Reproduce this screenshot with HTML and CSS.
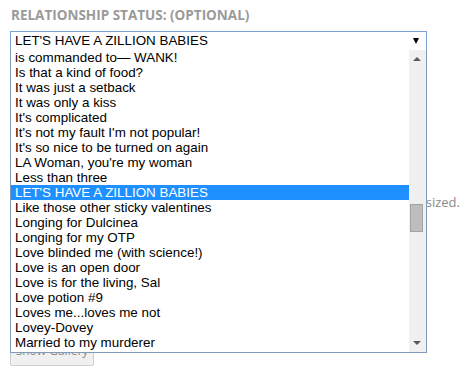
FILE: index.html
```html
<!DOCTYPE html>
<html>
<head>
<meta charset="utf-8">
<link rel="stylesheet" href="styles.css">
</head>
<body>
<div class="page">
  <div class="field">
    <div class="label">Relationship Status: (Optional)</div>
    <div class="select">
      <span class="select-value">LET'S HAVE A ZILLION BABIES</span>
      <span class="select-arrow"></span>
    </div>
    <div class="dropdown">
      <ul class="options">
        <li>is commanded to— WANK!</li>
        <li>Is that a kind of food?</li>
        <li>It was just a setback</li>
        <li>It was only a kiss</li>
        <li>It's complicated</li>
        <li>It's not my fault I'm not popular!</li>
        <li>It's so nice to be turned on again</li>
        <li>LA Woman, you're my woman</li>
        <li>Less than three</li>
        <li class="selected">LET'S HAVE A ZILLION BABIES</li>
        <li>Like those other sticky valentines</li>
        <li>Longing for Dulcinea</li>
        <li>Longing for my OTP</li>
        <li>Love blinded me (with science!)</li>
        <li>Love is an open door</li>
        <li>Love is for the living, Sal</li>
        <li>Love potion #9</li>
        <li>Loves me...loves me not</li>
        <li>Lovey-Dovey</li>
        <li>Married to my murderer</li>
      </ul>
      <div class="scrollbar">
        <div class="scroll-btn up"></div>
        <div class="scroll-track"><div class="scroll-thumb"></div></div>
        <div class="scroll-btn down"></div>
      </div>
    </div>
  </div>
  <p class="note">Images larger than the allowed size will be resized.</p>
  <button class="btn">Show Gallery</button>
</div>
</body>
</html>
```
FILE: styles.css
```css
html, body {
  margin: 0;
  padding: 0;
  background: #fff;
}
.page {
  padding: 6px 10px 0 10px;
  font-family: "Open Sans", "Liberation Sans", sans-serif;
}
.field {
  position: relative;
}
.label {
  font-family: "Open Sans", sans-serif;
  font-weight: 700;
  font-size: 13.5px;
  line-height: 18px;
  color: #9a9a9a;
  text-transform: uppercase;
  padding-left: 1px;
  margin-bottom: 7px;
}
.select {
  box-sizing: border-box;
  width: 417px;
  height: 20px;
  border: 1px solid #7da2d6;
  display: flex;
  align-items: center;
  justify-content: space-between;
  padding: 0 7px 0 4px;
  font-family: "Liberation Sans", Arial, sans-serif;
  font-size: 13.4px;
  color: #000;
}
.select-value {
  line-height: 18px;
}
.select-arrow {
  width: 0;
  height: 0;
  border-left: 3px solid transparent;
  border-right: 3px solid transparent;
  border-top: 6px solid #000;
}
.dropdown {
  position: absolute;
  left: 0;
  top: 44px;
  box-sizing: border-box;
  width: 417px;
  height: 303px;
  border: 1px solid #7f9bb8;
  border-top: none;
  background: #fff;
  display: flex;
  z-index: 5;
}
.options {
  list-style: none;
  margin: 0;
  padding: 0;
  flex: 1;
  font-family: "Liberation Sans", Arial, sans-serif;
  font-size: 13.4px;
  color: #000;
}
.options li {
  height: 15px;
  line-height: 15px;
  padding-left: 4px;
  white-space: nowrap;
}
.options li.selected {
  background: #1e90ff;
  color: #fff;
}
.scrollbar {
  width: 17px;
  background: #f0f0f0;
  display: flex;
  flex-direction: column;
}
.scroll-btn {
  height: 17px;
  position: relative;
}
.scroll-btn::after {
  content: "";
  position: absolute;
  left: 4px;
  width: 0;
  height: 0;
  border-left: 4px solid transparent;
  border-right: 4px solid transparent;
}
.scroll-btn.up::after {
  top: 7px;
  border-bottom: 4px solid #585858;
}
.scroll-btn.down::after {
  top: 6px;
  border-top: 4px solid #585858;
}
.scroll-track {
  flex: 1;
  position: relative;
}
.scroll-thumb {
  position: absolute;
  left: 1px;
  top: 137px;
  width: 11px;
  height: 26px;
  background: #bdbdbd;
  border: 1px solid #a3a3a3;
}
.note {
  width: 450px;
  text-align: right;
  margin: 0;
  margin-top: 142px;
  font-size: 13px;
  line-height: 18px;
  color: #8a8a8a;
}
.btn {
  display: block;
  box-sizing: border-box;
  margin-top: 129px;
  width: 84px;
  height: 26px;
  padding: 0 0 4px;
  line-height: 18px;
  border: 1px solid #cfcfcf;
  border-radius: 2px;
  background: #f0f0f0;
  color: #8c8c8c;
  font-family: "Open Sans", sans-serif;
  font-size: 12px;
  white-space: nowrap;
}
```
